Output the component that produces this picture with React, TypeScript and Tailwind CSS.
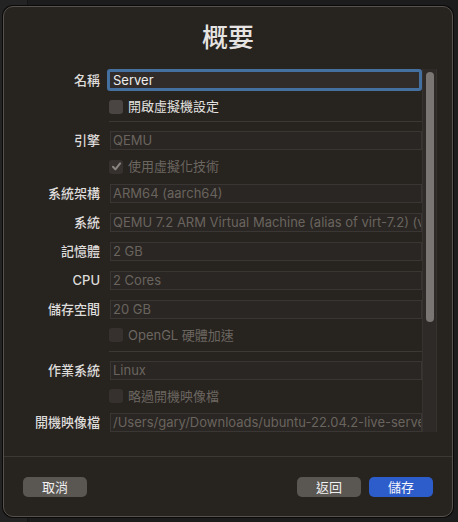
import React from "react";

const FONT = "font-['Inter','Noto_Sans_CJK_TC',sans-serif]";

function Label({ children }: { children: React.ReactNode }) {
  return (
    <div className="text-right text-[13px] leading-[19px] font-medium text-[#dedcda] whitespace-nowrap">
      {children}
    </div>
  );
}

function FieldRow({ label, value, className = "" }: { label: string; value: string; className?: string }) {
  return (
    <div className={`grid grid-cols-[96px_312px] gap-x-[10px] items-center ${className}`}>
      <Label>{label}</Label>
      <div className="h-[19px] border border-[#3a3633] bg-[#2a2623] pl-[2px] text-[13px] leading-[17px] text-[#69645e] whitespace-nowrap overflow-hidden">
        {value}
      </div>
    </div>
  );
}

function CheckRow({
  text,
  enabled = false,
  checked = false,
  className = "",
}: {
  text: string;
  enabled?: boolean;
  checked?: boolean;
  className?: string;
}) {
  return (
    <div className={`grid grid-cols-[96px_312px] gap-x-[10px] items-center h-[20px] ${className}`}>
      <div />
      <div className="flex items-center gap-[5px] -ml-px">
        <div
          className={`w-[14px] h-[14px] rounded-[3px] flex items-center justify-center ${
            enabled ? "bg-[#4a4542]" : "bg-[#36312e]"
          }`}
        >
          {checked && (
            <svg width="11" height="11" viewBox="0 0 10 10" fill="none">
              <path d="M1.8 5.2 L4 7.6 L8.3 2.2" stroke="#8a8580" strokeWidth="1.8" strokeLinecap="round" strokeLinejoin="round" />
            </svg>
          )}
        </div>
        <span className={`text-[13px] leading-[19px] ${enabled ? "text-[#e4e2e0]" : "text-[#6b6660]"} whitespace-nowrap`}>
          {text}
        </span>
      </div>
    </div>
  );
}

export default function App() {
  return (
    <div className={`w-[458px] h-[522px] bg-[#1c1c1c] relative overflow-hidden ${FONT}`}>
      <div className="absolute left-0 top-0 w-[28px] h-[522px] bg-[#232323] border-r border-[#151515]" />
      <div className="relative pt-[6px] pl-[3px]">
        <div className="w-[450px] h-[511px] rounded-[10px] border border-[#56524e] shadow-[0_0_0_1px_#0a0a0a] bg-[#27231f] flex flex-col overflow-hidden">
          <div className="pt-[15px] text-center text-[26px] leading-[32px] font-medium text-[#e6e4e2]">概要</div>

          <div className="mt-[15px] h-[363px] flex overflow-hidden">
            <div className="w-[418px] flex flex-col">
              <div className="grid grid-cols-[96px_312px] gap-x-[10px] items-center h-[22px]">
                <Label>名稱</Label>
                <div className="-ml-[3px] w-[315px] h-[22px] border-[3px] border-[#44709f] rounded-[3px] bg-[#312c29] pl-[3px] text-[13px] leading-[16px] text-[#eeeeee]">
                  Server
                </div>
              </div>
              <CheckRow text="開啟虛擬機設定" enabled className="mt-[6px]" />
              <div className="ml-[105px] mt-[5px] w-[313px] h-px bg-[#3c3834]" />
              <FieldRow label="引擎" value="QEMU" className="mt-[9px]" />
              <CheckRow text="使用虛擬化技術" checked className="mt-[7px]" />
              <FieldRow label="系統架構" value="ARM64 (aarch64)" className="mt-[7px]" />
              <FieldRow label="系統" value="QEMU 7.2 ARM Virtual Machine (alias of virt-7.2) (virt)" className="mt-[10px]" />
              <FieldRow label="記憶體" value="2 GB" className="mt-[10px]" />
              <FieldRow label="CPU" value="2 Cores" className="mt-[10px]" />
              <FieldRow label="儲存空間" value="20 GB" className="mt-[10px]" />
              <CheckRow text="OpenGL 硬體加速" className="mt-[7px]" />
              <div className="ml-[105px] mt-[6px] w-[313px] h-px bg-[#3c3834]" />
              <FieldRow label="作業系統" value="Linux" className="mt-[9px]" />
              <CheckRow text="略過開機映像檔" className="mt-[7px]" />
              <FieldRow label="開機映像檔" value="/Users/gary/Downloads/ubuntu-22.04.2-live-server-arm64.iso" className="mt-[7px]" />
            </div>
            <div className="w-[15px] h-[363px] bg-[#2e2a27] border-l border-r border-[#36322f] flex justify-center pt-[3px]">
              <div className="w-[8px] h-[250px] rounded-full bg-[#7a7673]" />
            </div>
          </div>

          <div className="mt-[24px] h-px bg-[#3b3733]" />

          <div className="mt-[20px] px-[19px] flex justify-between">
            <button className="w-[64px] h-[20px] rounded-[5px] bg-[#5a5652] text-[13px] leading-[20px] text-[#f0f0f0]">取消</button>
            <div className="flex gap-[8px]">
              <button className="w-[64px] h-[20px] rounded-[5px] bg-[#5a5652] text-[13px] leading-[20px] text-[#f0f0f0]">返回</button>
              <button className="w-[64px] h-[20px] rounded-[5px] bg-[#2d5ccb] text-[13px] leading-[20px] text-[#f4f6fb]">儲存</button>
            </div>
          </div>
        </div>
      </div>
    </div>
  );
}
